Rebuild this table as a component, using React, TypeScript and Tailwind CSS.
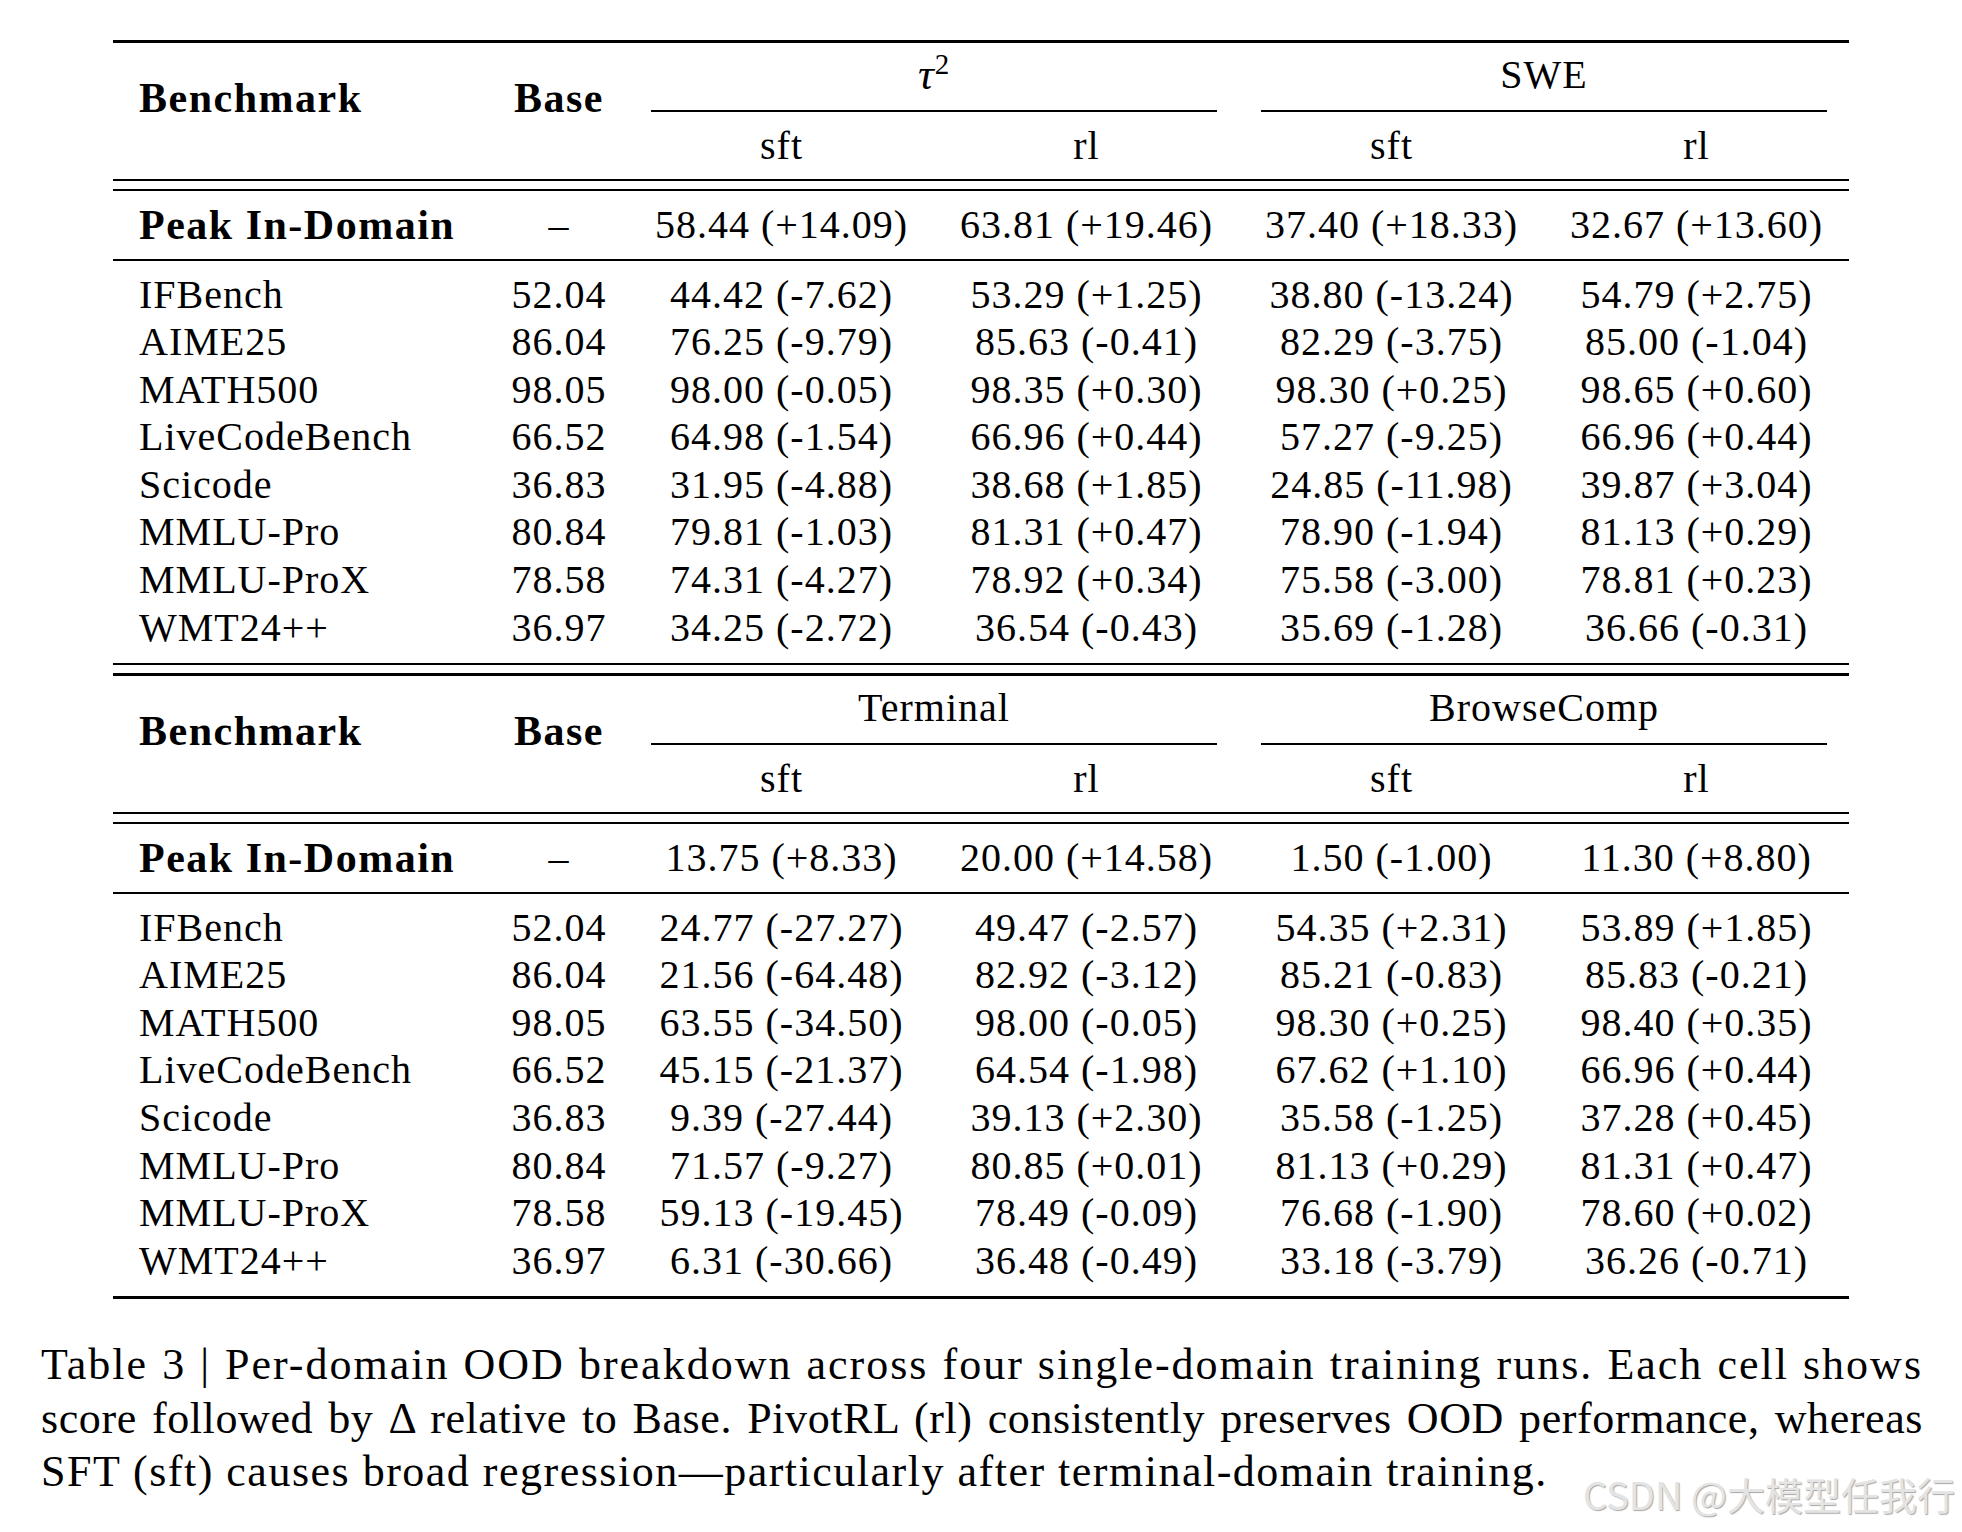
import React from 'react';

type Row = [string, string, string, string, string, string];

const COLS = 'grid grid-cols-[376px_140px_305px_305px_305px_305px]';

const top: Row[] = [
  ['IFBench', '52.04', '44.42 (-7.62)', '53.29 (+1.25)', '38.80 (-13.24)', '54.79 (+2.75)'],
  ['AIME25', '86.04', '76.25 (-9.79)', '85.63 (-0.41)', '82.29 (-3.75)', '85.00 (-1.04)'],
  ['MATH500', '98.05', '98.00 (-0.05)', '98.35 (+0.30)', '98.30 (+0.25)', '98.65 (+0.60)'],
  ['LiveCodeBench', '66.52', '64.98 (-1.54)', '66.96 (+0.44)', '57.27 (-9.25)', '66.96 (+0.44)'],
  ['Scicode', '36.83', '31.95 (-4.88)', '38.68 (+1.85)', '24.85 (-11.98)', '39.87 (+3.04)'],
  ['MMLU-Pro', '80.84', '79.81 (-1.03)', '81.31 (+0.47)', '78.90 (-1.94)', '81.13 (+0.29)'],
  ['MMLU-ProX', '78.58', '74.31 (-4.27)', '78.92 (+0.34)', '75.58 (-3.00)', '78.81 (+0.23)'],
  ['WMT24++', '36.97', '34.25 (-2.72)', '36.54 (-0.43)', '35.69 (-1.28)', '36.66 (-0.31)'],
];

const bottom: Row[] = [
  ['IFBench', '52.04', '24.77 (-27.27)', '49.47 (-2.57)', '54.35 (+2.31)', '53.89 (+1.85)'],
  ['AIME25', '86.04', '21.56 (-64.48)', '82.92 (-3.12)', '85.21 (-0.83)', '85.83 (-0.21)'],
  ['MATH500', '98.05', '63.55 (-34.50)', '98.00 (-0.05)', '98.30 (+0.25)', '98.40 (+0.35)'],
  ['LiveCodeBench', '66.52', '45.15 (-21.37)', '64.54 (-1.98)', '67.62 (+1.10)', '66.96 (+0.44)'],
  ['Scicode', '36.83', '9.39 (-27.44)', '39.13 (+2.30)', '35.58 (-1.25)', '37.28 (+0.45)'],
  ['MMLU-Pro', '80.84', '71.57 (-9.27)', '80.85 (+0.01)', '81.13 (+0.29)', '81.31 (+0.47)'],
  ['MMLU-ProX', '78.58', '59.13 (-19.45)', '78.49 (-0.09)', '76.68 (-1.90)', '78.60 (+0.02)'],
  ['WMT24++', '36.97', '6.31 (-30.66)', '36.48 (-0.49)', '33.18 (-3.79)', '36.26 (-0.71)'],
];

function Group({ title }: { title: React.ReactNode }) {
  return (
    <div className="col-span-2 pt-[7.5px]">
      <div className="h-[48px] text-center leading-[48px]">{title}</div>
      <div className="mx-[22px] mt-[11.5px] h-[1.5px] bg-black" />
      <div className="mt-[10px] grid grid-cols-2 text-center leading-[48px]">
        <div>sft</div>
        <div>rl</div>
      </div>
    </div>
  );
}

function Block({ left, right, peak, rows }: { left: React.ReactNode; right: React.ReactNode; peak: string[]; rows: Row[] }) {
  return (
    <div>
      <div className={`${COLS} h-[136px]`}>
        <div className="pl-[26px] pt-[31px] text-[42px] font-bold leading-[48px] tracking-[1.5px]">Benchmark</div>
        <div className="pt-[31px] text-center text-[42px] font-bold leading-[48px] tracking-[1.5px]">Base</div>
        <Group title={left} />
        <Group title={right} />
      </div>
      <div className="h-[2px] bg-black" />
      <div className="h-[8px]" />
      <div className="h-[2px] bg-black" />
      <div className={`${COLS} h-[68px] pt-[10px] leading-[48px]`}>
        <div className="pl-[26px] text-[42px] font-bold tracking-[1.5px]">Peak In-Domain</div>
        <div className="text-center">–</div>
        {peak.map((v, i) => (
          <div key={i} className="text-center">{v}</div>
        ))}
      </div>
      <div className="h-[2px] bg-black" />
      <div className="pt-[9.5px] pb-[11.9px]">
        {rows.map((r) => (
          <div key={r[0]} className={`${COLS} h-[47.6px] leading-[47.6px]`}>
            <div className="pl-[26px]">{r[0]}</div>
            {r.slice(1).map((v, i) => (
              <div key={i} className="text-center">{v}</div>
            ))}
          </div>
        ))}
      </div>
    </div>
  );
}

export default function App() {
  return (
    <div className="relative min-h-[1532px] w-[1962px] bg-white font-['Liberation_Serif',serif] text-[40px] tracking-[1px] text-black">
      <div className="ml-[113px] w-[1736px] pt-[40px]">
        <div className="h-[3px] bg-black" />
        <Block
          left={
            <span>
              <span className="text-[44px] italic">τ</span>
              <sup className="text-[29px]">2</sup>
            </span>
          }
          right="SWE"
          peak={['58.44 (+14.09)', '63.81 (+19.46)', '37.40 (+18.33)', '32.67 (+13.60)']}
          rows={top}
        />
        <div className="h-[2px] bg-black" />
        <div className="h-[8px]" />
        <div className="h-[3px] bg-black" />
        <Block
          left="Terminal"
          right="BrowseComp"
          peak={['13.75 (+8.33)', '20.00 (+14.58)', '1.50 (-1.00)', '11.30 (+8.80)']}
          rows={bottom}
        />
        <div className="h-[3px] bg-black" />
      </div>

      <div className="ml-[41px] mt-[39px] w-[1882px] text-[44px] leading-[53.5px] tracking-[1.5px]">
        <div className="whitespace-nowrap text-justify tracking-[2px] [text-align-last:justify]">
          Table 3 | Per-domain OOD breakdown across four single-domain training runs.  Each cell shows
        </div>
        <div className="whitespace-nowrap text-justify tracking-[0.6px] [text-align-last:justify]">
          score followed by Δ relative to Base. PivotRL (rl) consistently preserves OOD performance, whereas
        </div>
        <div className="whitespace-nowrap">
          SFT (sft) causes broad regression—particularly after terminal-domain training.
        </div>
      </div>

      <div className="absolute left-[1583px] top-[1475px] whitespace-nowrap font-['Noto_Sans_CJK_SC',sans-serif] text-[38px] leading-none tracking-normal text-[#e4e4e4] [text-shadow:1px_1px_1px_rgba(0,0,0,0.35)]">
        CSDN @大模型任我行
      </div>
    </div>
  );
}
